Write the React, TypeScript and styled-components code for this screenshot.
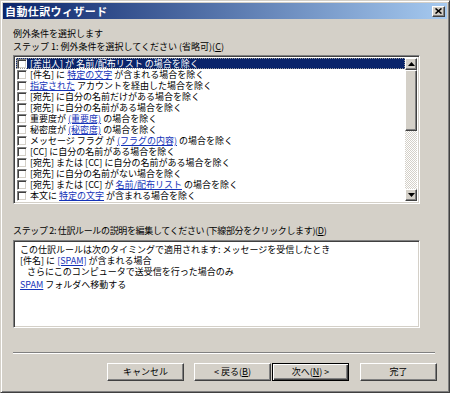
import React from "react";
import styled, { createGlobalStyle, css } from "styled-components";

const Global = createGlobalStyle`
  html, body { margin: 0; padding: 0; background: #d4d0c8; }
  body { font-family: "Noto Sans CJK JP", "Noto Sans", sans-serif; }
  * { box-sizing: border-box; }
`;

const Window = styled.div`
  width: 450px;
  height: 393px;
  display: flex;
  flex-direction: column;
  background: #d4d0c8;
  border: 1px solid;
  border-color: #d4d0c8 #404040 #404040 #d4d0c8;
  box-shadow: inset 1px 1px 0 #ffffff, inset -1px -1px 0 #808080;
  padding: 2px;
  font-size: 9px;
  color: #000;
`;

const TitleBar = styled.div`
  height: 16px;
  flex: none;
  display: flex;
  align-items: center;
  justify-content: space-between;
  padding: 0 2px 0 2px;
  background: linear-gradient(to right, #0a246a, #a6caf0);
`;

const TitleText = styled.div`
  color: #fff;
  font-weight: bold;
  font-size: 11px;
  line-height: 16px;
  letter-spacing: 0.4px;
`;

const raised = css`
  background: #d4d0c8;
  border: 1px solid;
  border-color: #ffffff #404040 #404040 #ffffff;
  box-shadow: inset -1px -1px 0 #808080;
`;

const CloseButton = styled.div`
  ${raised}
  width: 13px;
  height: 11px;
  display: flex;
  align-items: center;
  justify-content: center;
`;

const Body = styled.div`
  flex: 1;
  display: flex;
  flex-direction: column;
  padding: 8px 10px 0 10px;
`;

const Label = styled.div<{ $top?: number; $tight?: boolean }>`
  line-height: 13px;
  height: 13px;
  white-space: nowrap;
  margin-top: ${(p) => p.$top ?? 0}px;
  letter-spacing: ${(p) => (p.$tight ? "-0.35px" : "0")};
`;

const Key = styled.span`
  text-decoration: underline;
`;

const sunken = css`
  border: 1px solid;
  border-color: #808080 #ffffff #ffffff #808080;
  box-shadow: inset 1px 1px 0 #404040, inset -1px -1px 0 #d4d0c8;
`;

const ListBox = styled.div`
  ${sunken}
  margin-top: 2px;
  width: 407px;
  height: 149px;
  background: #fff;
  display: flex;
  padding: 2px;
`;

const Rows = styled.div`
  flex: 1;
  display: flex;
  flex-direction: column;
`;

const Row = styled.div<{ $selected?: boolean }>`
  height: 11px;
  display: flex;
  align-items: center;
  gap: 3px;
  padding-left: 1px;
  white-space: nowrap;
  line-height: 11px;
  color: ${(p) => (p.$selected ? "#fff" : "#000")};
  background: ${(p) => (p.$selected ? "#0a246a" : "transparent")};
  outline: ${(p) => (p.$selected ? "1px dotted #9a9a9a" : "none")};
  outline-offset: -1px;
`;

const Check = styled.span`
  ${sunken}
  width: 10px;
  height: 10px;
  flex: none;
  background: #fff;
`;

const Link = styled.span<{ $light?: boolean }>`
  color: ${(p) => (p.$light ? "#fff" : "#1533b8")};
  text-decoration: underline;
`;

const Scrollbar = styled.div`
  width: 12px;
  flex: none;
  display: flex;
  flex-direction: column;
  background-color: #ffffff;
  background-image: conic-gradient(#d4d0c8 25%, #fff 0 50%, #d4d0c8 0 75%, #fff 0);
  background-size: 2px 2px;
`;

const ArrowButton = styled.div`
  ${raised}
  height: 12px;
  flex: none;
  display: flex;
  align-items: center;
  justify-content: center;
`;

const Thumb = styled.div`
  ${raised}
  height: 61px;
  flex: none;
`;

const Track = styled.div`
  flex: 1;
`;

const DescBox = styled.div`
  ${sunken}
  margin-top: 3px;
  width: 407px;
  height: 88px;
  background: #fff;
  padding: 3px 6px;
  display: flex;
  flex-direction: column;
`;

const DescLine = styled.div<{ $indent?: number; $top?: number }>`
  height: 11px;
  line-height: 11px;
  white-space: nowrap;
  padding-left: ${(p) => p.$indent ?? 0}px;
  margin-top: ${(p) => p.$top ?? 0}px;
`;

const Separator = styled.div`
  margin-top: 24px;
  width: 422px;
  height: 2px;
  border-top: 1px solid #808080;
  border-bottom: 1px solid #ffffff;
`;

const ButtonRow = styled.div`
  margin-top: 9px;
  display: flex;
  justify-content: flex-end;
`;

const Button = styled.div<{ $default?: boolean; $gap?: number }>`
  ${raised}
  width: 77px;
  height: 18px;
  margin-left: ${(p) => p.$gap ?? 0}px;
  display: flex;
  align-items: center;
  justify-content: center;
  line-height: 16px;
  white-space: nowrap;
  ${(p) =>
    p.$default &&
    css`
      border: 1px solid #000;
      box-shadow: inset 1px 1px 0 #ffffff, inset -1px -1px 0 #404040,
        inset -2px -2px 0 #808080;
    `}
`;

type Part = string | { link: string };
const items: Part[][] = [
  ["[差出人] が ", { link: "名前/配布リスト" }, " の場合を除く"],
  ["[件名] に ", { link: "特定の文字" }, " が含まれる場合を除く"],
  [{ link: "指定された" }, " アカウントを経由した場合を除く"],
  ["[宛先] に自分の名前だけがある場合を除く"],
  ["[宛先] に自分の名前がある場合を除く"],
  ["重要度が ", { link: "(重要度)" }, " の場合を除く"],
  ["秘密度が ", { link: "(秘密度)" }, " の場合を除く"],
  ["メッセージ フラグ が ", { link: "(フラグの内容)" }, " の場合を除く"],
  ["[CC] に自分の名前がある場合を除く"],
  ["[宛先] または [CC] に自分の名前がある場合を除く"],
  ["[宛先] に自分の名前がない場合を除く"],
  ["[宛先] または [CC] が ", { link: "名前/配布リスト" }, " の場合を除く"],
  ["本文に ", { link: "特定の文字" }, " が含まれる場合を除く"],
];

const UpArrow = () => (
  <svg width="7" height="4" viewBox="0 0 7 4">
    <polygon points="3.5,0 7,4 0,4" fill="#000" />
  </svg>
);
const DownArrow = () => (
  <svg width="7" height="4" viewBox="0 0 7 4">
    <polygon points="0,0 7,0 3.5,4" fill="#000" />
  </svg>
);

export default function App() {
  return (
    <>
      <Global />
      <Window>
        <TitleBar>
          <TitleText>自動仕訳ウィザード</TitleText>
          <CloseButton>
            <svg width="7" height="6" viewBox="0 0 7 6">
              <path d="M0.5 0.5 L6.5 5.5 M6.5 0.5 L0.5 5.5" stroke="#000" strokeWidth="1.6" />
            </svg>
          </CloseButton>
        </TitleBar>
        <Body>
          <Label>例外条件を選択します</Label>
          <Label>
            ステップ 1: 例外条件を選択してください (省略可)(<Key>C</Key>)
          </Label>
          <ListBox>
            <Rows>
              {items.map((parts, i) => (
                <Row key={i} $selected={i === 0}>
                  <Check />
                  <span>
                    {parts.map((p, j) =>
                      typeof p === "string" ? (
                        <React.Fragment key={j}>{p}</React.Fragment>
                      ) : (
                        <Link key={j} $light={i === 0}>
                          {p.link}
                        </Link>
                      )
                    )}
                  </span>
                </Row>
              ))}
            </Rows>
            <Scrollbar>
              <ArrowButton>
                <UpArrow />
              </ArrowButton>
              <Thumb />
              <Track />
              <ArrowButton>
                <DownArrow />
              </ArrowButton>
            </Scrollbar>
          </ListBox>
          <Label $top={20} $tight>
            ステップ 2: 仕訳ルールの説明を編集してください (下線部分をクリックします)(<Key>D</Key>)
          </Label>
          <DescBox>
            <DescLine>この仕訳ルールは次のタイミングで適用されます: メッセージを受信したとき</DescLine>
            <DescLine>
              [件名] に <Link>[SPAM]</Link> が含まれる場合
            </DescLine>
            <DescLine $indent={7}>さらにこのコンピュータで送受信を行った場合のみ</DescLine>
            <DescLine $top={2}>
              <Link>SPAM</Link> フォルダへ移動する
            </DescLine>
          </DescBox>
          <Separator />
          <ButtonRow>
            <Button>キャンセル</Button>
            <Button $gap={10}>
              &lt; 戻る(<Key>B</Key>)
            </Button>
            <Button $default $gap={1}>
              次へ(<Key>N</Key>) &gt;
            </Button>
            <Button $gap={11}>完了</Button>
          </ButtonRow>
        </Body>
      </Window>
    </>
  );
}
